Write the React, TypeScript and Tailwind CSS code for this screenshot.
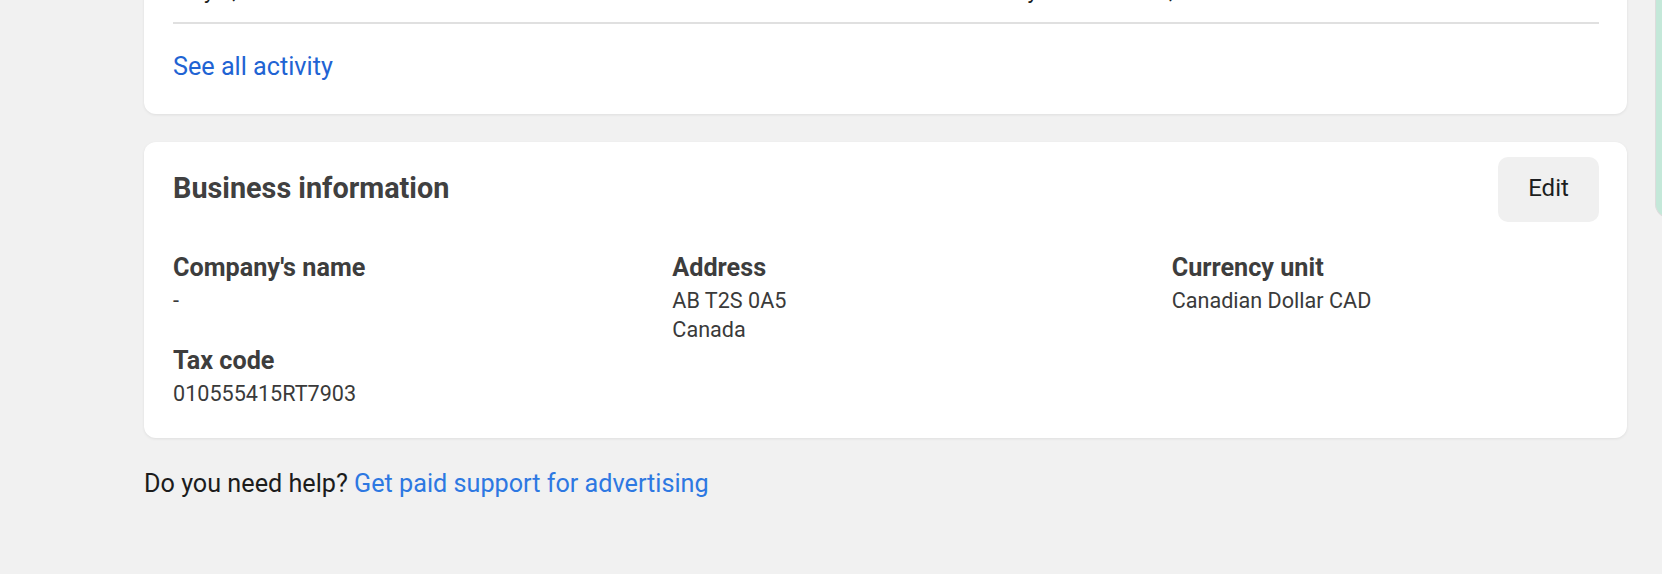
import React from 'react';

type Field = {
  label: string;
  lines: string[];
};

const companyFields: Field[] = [
  { label: "Company's name", lines: ['-'] },
  { label: 'Tax code', lines: ['010555415RT7903'] },
];

const addressField: Field = { label: 'Address', lines: ['AB T2S 0A5', 'Canada'] };
const currencyField: Field = { label: 'Currency unit', lines: ['Canadian Dollar CAD'] };

const InfoField = ({ field }: { field: Field }) => (
  <div className="flex flex-col">
    <span className="text-[25.2px] font-bold leading-[30px] text-[#3d3d3d]">{field.label}</span>
    <div className="mt-[3px] flex flex-col">
      {field.lines.map((line) => (
        <span key={line} className="text-[21.6px] leading-[29px] text-[#3a3a3a]">
          {line}
        </span>
      ))}
    </div>
  </div>
);

const App = () => {
  return (
    <div
      className="flex h-[574px] w-full overflow-hidden bg-[#f1f1f1]"
      style={{ fontFamily: 'Roboto, "Noto Sans", sans-serif' }}
    >
      <div className="w-[144px] shrink-0" />

      <main className="flex w-[1483px] shrink-0 flex-col">
        {/* activity card, cut off at the top */}
        <section className="-mt-[24px] rounded-b-[12px] bg-white pb-[32px] pl-[29px] pr-[28px] shadow-[0_1px_3px_rgba(0,0,0,0.08)]">
          <div className="flex text-[22px] leading-[30px] text-[#1c1e21]">
            <span className="w-[829px]">May 2, 2024</span>
            <span>Payment method, Visa</span>
          </div>
          <div className="mt-[16px] h-[2px] bg-[#e0e0e0]" />
          <a href="#" className="mt-[28px] block text-[25.2px] leading-[30px] text-[#2163d3]">
            See all activity
          </a>
        </section>

        {/* business information */}
        <section className="mt-[28px] rounded-[12px] bg-white pb-[30px] pl-[29px] pr-[28px] pt-[15px] shadow-[0_1px_3px_rgba(0,0,0,0.08)]">
          <div className="flex items-center justify-between">
            <h2 className="mb-[4px] text-[28.8px] font-bold leading-[36px] text-[#404040]">Business information</h2>
            <button
              type="button"
              className="flex h-[65px] w-[101px] items-center justify-center rounded-[10px] bg-[#f0f0f0] pb-[4px] text-[24px] text-[#1c1e21]"
            >
              Edit
            </button>
          </div>

          <div className="mt-[31px] grid grid-cols-3 gap-x-[72px]">
            <div className="flex flex-col gap-[31px]">
              {companyFields.map((field) => (
                <InfoField key={field.label} field={field} />
              ))}
            </div>
            <InfoField field={addressField} />
            <InfoField field={currencyField} />
          </div>
        </section>

        <p className="mt-[31px] text-[25.2px] leading-[30px] text-[#1c1c1c]">
          Do you need help?{' '}
          <a href="#" className="text-[#2d78e2]">
            Get paid support for advertising
          </a>
        </p>
      </main>

      <div className="ml-[28px] h-[218px] w-[300px] shrink-0 rounded-bl-[14px] border-l border-b border-[#dcdcdc] bg-[#c4e8d9]" />
    </div>
  );
};

export default App;
